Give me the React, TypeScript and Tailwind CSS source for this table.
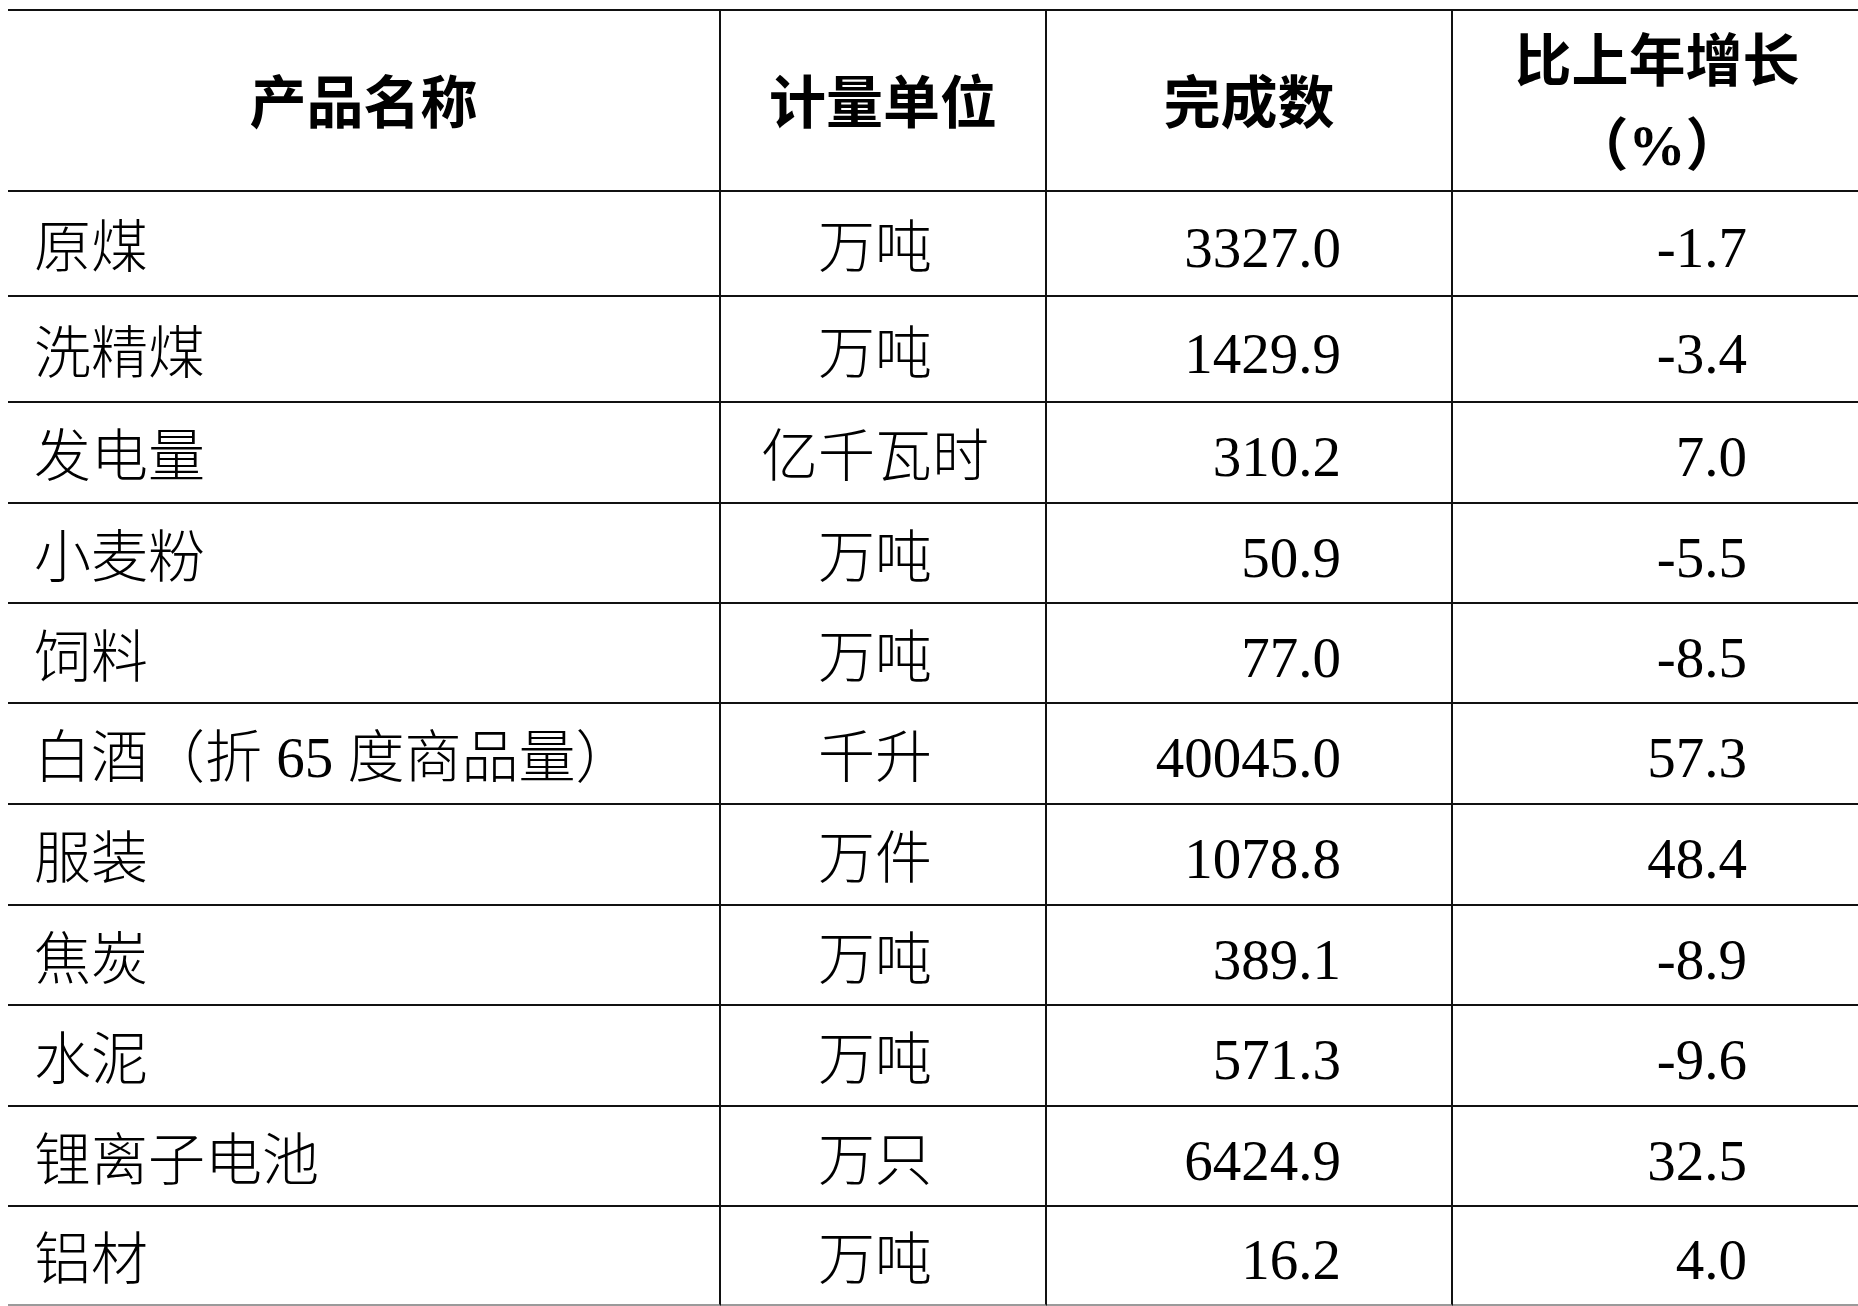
const rows = [
  ['原煤', '万吨', '3327.0', '-1.7'],
  ['洗精煤', '万吨', '1429.9', '-3.4'],
  ['发电量', '亿千瓦时', '310.2', '7.0'],
  ['小麦粉', '万吨', '50.9', '-5.5'],
  ['饲料', '万吨', '77.0', '-8.5'],
  ['白酒（折 65 度商品量）', '千升', '40045.0', '57.3'],
  ['服装', '万件', '1078.8', '48.4'],
  ['焦炭', '万吨', '389.1', '-8.9'],
  ['水泥', '万吨', '571.3', '-9.6'],
  ['锂离子电池', '万只', '6424.9', '32.5'],
  ['铝材', '万吨', '16.2', '4.0'],
]

export default function App() {
  return (
    <div className="w-[1858px] h-[1306px] overflow-hidden bg-white pt-[9px] pl-[8px] font-['Liberation_Serif','Noto_Sans_CJK_SC',serif] text-[57px] text-black">
      <div className="grid w-[1853px] grid-cols-[713px_326px_406px_408px] grid-rows-[183px_105px_106px_101px_100px_100px_101px_101px_100px_101px_100px_99px]">
        {/* header */}
        <div className="flex items-center justify-center border-y-2 border-r-2 border-[#111] font-bold leading-none pt-[6px]">
          产品名称
        </div>
        <div className="flex items-center justify-center border-y-2 border-r-2 border-[#111] font-bold leading-none pt-[6px]">
          计量单位
        </div>
        <div className="flex items-center justify-center border-y-2 border-r-2 border-[#111] font-bold leading-none pt-[6px]">
          完成数
        </div>
        <div className="flex flex-col items-center justify-center border-y-2 border-[#111] font-bold leading-[84px] pt-[6px]">
          <span>比上年增长</span>
          <span>（%）</span>
        </div>

        {rows.map(([name, unit, value, growth], i) => {
          const line = i === rows.length - 1 ? 'border-[#9a9a9a]' : 'border-[#111]'
          return (
            <div key={name} className="contents font-light">
              <div className={`flex items-center border-b-2 ${line} border-r-2 border-r-[#111] pl-[26px] leading-none pt-[8px]`}>
                {name}
              </div>
              <div className={`flex items-center justify-center border-b-2 ${line} border-r-2 border-r-[#111] pr-[16px] leading-none pt-[8px]`}>
                {unit}
              </div>
              <div className={`flex items-center justify-end border-b-2 ${line} border-r-2 border-r-[#111] pr-[110px] leading-none pt-[8px]`}>
                {value}
              </div>
              <div className={`flex items-center justify-end border-b-2 ${line} pr-[114px] leading-none pt-[8px]`}>
                {growth}
              </div>
            </div>
          )
        })}
      </div>
    </div>
  )
}
